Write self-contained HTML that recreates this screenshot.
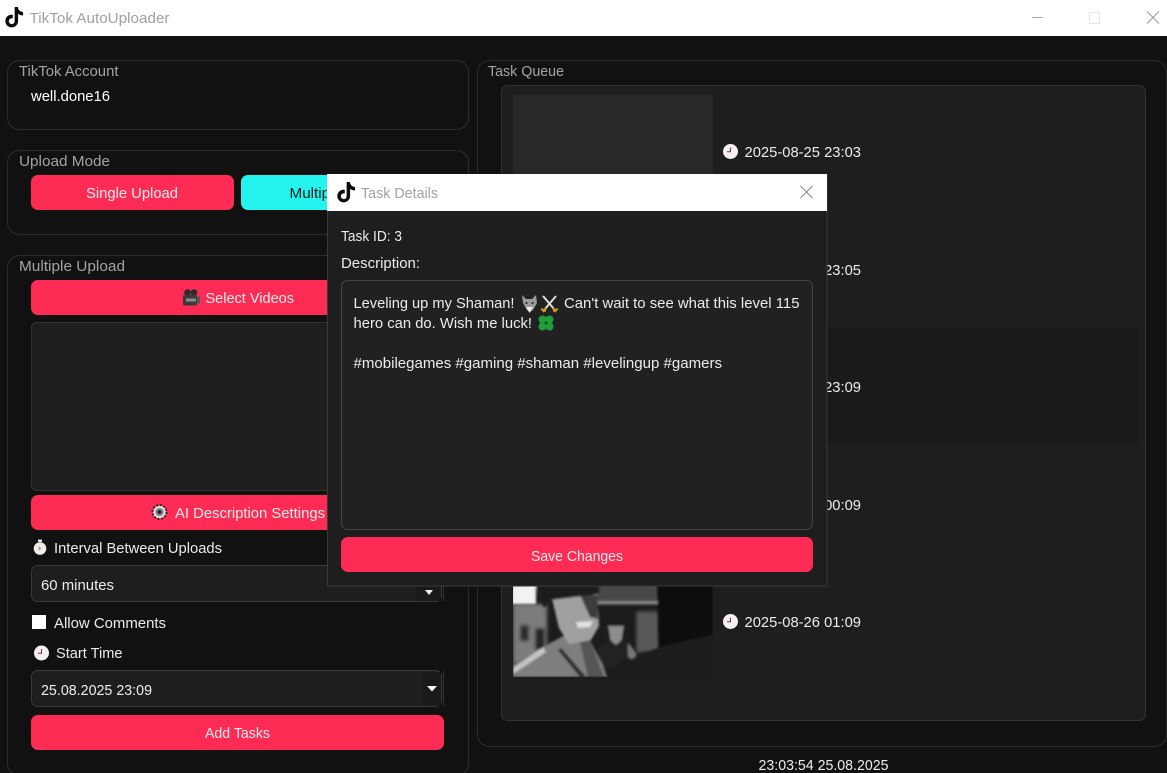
<!DOCTYPE html>
<html lang="en"><head><meta charset="utf-8"><title>TikTok AutoUploader</title>
<style>
html,body{margin:0;padding:0;width:1167px;height:773px;overflow:hidden;background:#111}
svg{display:block}
text{font-family:"Liberation Sans",sans-serif;font-size:15px;fill:#ececec}
.g{fill:#a4a4a4}
.t{fill:#a0a0a0}
.w{fill:#fff}
</style></head><body>
<svg width="1167" height="773" viewBox="0 0 1167 773" xmlns="http://www.w3.org/2000/svg">
<defs>
<path id="tk" d="M12.525.02c1.31-.02 2.61-.01 3.91-.02.08 1.53.63 3.09 1.75 4.17 1.12 1.11 2.7 1.62 4.24 1.79v4.03c-1.44-.05-2.89-.35-4.2-.97-.57-.26-1.1-.59-1.62-.93-.01 2.92.01 5.84-.02 8.75-.08 1.4-.54 2.79-1.35 3.94-1.31 1.92-3.58 3.17-5.91 3.21-1.43.08-2.86-.31-4.08-1.03-2.02-1.19-3.44-3.37-3.65-5.71-.02-.5-.03-1-.01-1.49.18-1.9 1.12-3.72 2.58-4.96 1.66-1.44 3.98-2.13 6.15-1.72.02 1.48-.04 2.96-.04 4.44-.99-.32-2.15-.23-3.02.37-.63.41-1.11 1.04-1.36 1.75-.21.51-.15 1.07-.14 1.61.24 1.64 1.82 3.02 3.5 2.87 1.12-.01 2.19-.66 2.77-1.61.19-.33.4-.67.41-1.06.1-1.79.06-3.57.07-5.36.01-4.03-.01-8.05.02-12.07z"/>
<g id="clk"><circle cx="8" cy="8" r="7.500" fill="#f4f1ee"/><path d="M8 4V8.200H4.500" fill="none" stroke="#7a2f48" stroke-width="1"/></g>
<filter id="b1" x="-10%" y="-10%" width="120%" height="120%"><feGaussianBlur stdDeviation="1"/></filter>
<filter id="b2" x="-10%" y="-10%" width="120%" height="120%"><feGaussianBlur stdDeviation="1.800"/></filter>
<clipPath id="pc"><rect x="513" y="565" width="200" height="112"/></clipPath>
</defs>

<rect width="1167" height="773" fill="#111"/>
<!-- title bar -->
<rect width="1167" height="36" fill="#fff"/>
<use href="#tk" transform="translate(4 7) scale(.85)" fill="#0c0c0c"/>
<text class="t" x="29.500" y="23" textLength="140" lengthAdjust="spacingAndGlyphs">TikTok AutoUploader</text>
<path d="M1032 17.500h11" stroke="#aaa"/>
<rect x="1089.500" y="12.500" width="10" height="11" fill="none" stroke="#e6e6e6"/>
<path d="M1147 11.500l12 12M1159 11.500l-12 12" stroke="#999" fill="none"/>

<!-- groups -->
<g fill="none" stroke="#2c2c2c" stroke-width="1">
<rect x="7.500" y="60.500" width="461" height="69" rx="12"/>
<rect x="7.500" y="150.500" width="461" height="84" rx="12"/>
<rect x="7.500" y="255.500" width="461" height="520" rx="12"/>
<rect x="477.500" y="60.500" width="689" height="686" rx="12"/>
</g>
<rect x="18" y="61" width="104" height="18" fill="#111"/>
<rect x="18" y="151" width="96" height="18" fill="#111"/>
<rect x="18" y="256" width="110" height="18" fill="#111"/>
<rect x="487" y="61" width="79" height="18" fill="#111"/>
<text class="g" x="19" y="76" textLength="99.500" lengthAdjust="spacingAndGlyphs">TikTok Account</text>
<text class="w" x="31" y="101" textLength="79" lengthAdjust="spacingAndGlyphs">well.done16</text>
<text class="g" x="19" y="166" textLength="91" lengthAdjust="spacingAndGlyphs">Upload Mode</text>
<text class="g" x="19" y="271" textLength="106" lengthAdjust="spacingAndGlyphs">Multiple Upload</text>
<text class="g" x="488" y="76" textLength="76" lengthAdjust="spacingAndGlyphs">Task Queue</text>

<!-- mode buttons -->
<rect x="31" y="175" width="203" height="35" rx="7" fill="#fe2c55"/>
<text x="86" y="198" textLength="92" lengthAdjust="spacingAndGlyphs">Single Upload</text>
<rect x="241" y="175" width="203" height="35" rx="7" fill="#25f4ee"/>
<text x="289.500" y="198" textLength="105" lengthAdjust="spacingAndGlyphs" style="fill:#06201f">Multiple Upload</text>

<!-- select videos -->
<rect x="31" y="280" width="413" height="35" rx="7" fill="#fe2c55"/>
<g transform="translate(183 289)">
<circle cx="4.500" cy="3.500" r="3.300" fill="#2c2c2c"/><circle cx="11" cy="3.500" r="3.300" fill="#2c2c2c"/>
<rect x="0" y="6" width="14" height="10.500" rx="1" fill="#3a3a3a"/><rect x="3" y="9.500" width="10" height="3" fill="#8a8a8a"/><path d="M14 8l3-1v8l-3-1z" fill="#555"/>
</g>
<text x="205.500" y="303" textLength="88.500" lengthAdjust="spacingAndGlyphs">Select Videos</text>

<!-- file list -->
<rect x="31.500" y="322.500" width="412" height="168" rx="5" fill="#1e1e1e" stroke="#333"/>

<!-- AI settings -->
<rect x="31" y="495" width="413" height="35" rx="7" fill="#fe2c55"/>
<g transform="translate(152 504.500)">
<circle cx="7.500" cy="7.500" r="6.300" fill="#e8e8e8"/>
<circle cx="7.500" cy="7.500" r="7" fill="none" stroke="#2a2a2a" stroke-width="2" stroke-dasharray="2 1.670"/>
<circle cx="7.500" cy="7.500" r="4.300" fill="#8c8c8c"/><circle cx="7.500" cy="7.500" r="2" fill="#222"/>
</g>
<text x="175" y="518" textLength="150" lengthAdjust="spacingAndGlyphs">AI Description Settings</text>

<!-- interval -->
<g transform="translate(33 539.500)"><rect x="5" y="0" width="4" height="2.500" fill="#ddd"/><circle cx="7" cy="9" r="6.300" fill="#f0ede8"/><path d="M5.500 7.500l2 1.500-2 1.500" stroke="#777" fill="none" stroke-width=".8"/></g>
<text x="54" y="553" textLength="168" lengthAdjust="spacingAndGlyphs">Interval Between Uploads</text>
<rect x="31.500" y="565.500" width="410" height="36" rx="6" fill="#1e1e1e" stroke="#3a3a3a"/>
<path d="M443.500 566v35" stroke="#333"/>
<rect x="416" y="567" width="25" height="34" fill="#1a1a1a"/>
<path d="M425 590h8l-4 5z" fill="#f2f2f2"/>
<text x="41" y="590" textLength="73" lengthAdjust="spacingAndGlyphs">60 minutes</text>

<!-- checkbox -->
<rect x="32" y="615" width="14" height="14" fill="#fff"/>
<text x="54" y="628" textLength="112" lengthAdjust="spacingAndGlyphs">Allow Comments</text>

<!-- start time -->
<use href="#clk" x="33.500" y="645"/>
<text x="56" y="658" textLength="66.500" lengthAdjust="spacingAndGlyphs">Start Time</text>
<rect x="31.500" y="670.500" width="410" height="36" rx="6" fill="#1e1e1e" stroke="#3a3a3a"/>
<path d="M443.500 671v35" stroke="#333"/>
<rect x="423" y="672" width="18" height="34" fill="#1a1a1a"/>
<path d="M427 686h10l-5 5.500z" fill="#f7f7f7"/>
<text x="41" y="695" textLength="111" lengthAdjust="spacingAndGlyphs">25.08.2025 23:09</text>
<rect x="31" y="715" width="413" height="35" rx="7" fill="#fe2c55"/>
<text x="205" y="738" textLength="65" lengthAdjust="spacingAndGlyphs">Add Tasks</text>

<!-- queue -->
<rect x="501.500" y="85.500" width="644" height="635" rx="6" fill="#1e1e1e" stroke="#333"/>
<rect x="507" y="327" width="631" height="118" rx="4" fill="#1a1a1a"/>
<rect x="513" y="95" width="200" height="112" fill="#282828"/>
<use href="#clk" x="722.500" y="143.500"/>
<text x="744.500" y="157" textLength="116.500" lengthAdjust="spacingAndGlyphs">2025-08-25 23:03</text>
<text x="744.500" y="275" textLength="116.500" lengthAdjust="spacingAndGlyphs">2025-08-25 23:05</text>
<text x="744.500" y="392" textLength="116.500" lengthAdjust="spacingAndGlyphs">2025-08-25 23:09</text>
<text x="744.500" y="510" textLength="116.500" lengthAdjust="spacingAndGlyphs">2025-08-26 00:09</text>
<use href="#clk" x="722.500" y="613.500"/>
<text x="744.500" y="627" textLength="116.500" lengthAdjust="spacingAndGlyphs">2025-08-26 01:09</text>

<!-- photo -->
<g clip-path="url(#pc)">
<rect x="513" y="565" width="200" height="112" fill="#1c1c1c"/>
<g filter="url(#b2)">
<rect x="590" y="580" width="72" height="24" fill="#4a4a4a"/>
<rect x="597" y="605" width="62" height="50" fill="#1b1b1b"/>
<rect x="637" y="612" width="22" height="40" fill="#585858"/>
<rect x="513" y="604" width="34" height="60" fill="#7c7c7c"/>
<rect x="520" y="625" width="9" height="16" fill="#2c2c2c"/>
<rect x="535" y="628" width="10" height="22" fill="#252525"/>
</g>
<g filter="url(#b1)">
<rect x="512" y="580" width="24" height="24" fill="#f2f2f2"/>
<rect x="597" y="601" width="62" height="3" fill="#8a8a8a"/>
<path d="M513 677v-12l30-18 22-12 22 0 16 30 4 12z" fill="#7e7e7e"/>
<path d="M580 642l10-2 14 37h-16z" fill="#555"/>
<path d="M513 668l30-21 3 5-33 22z" fill="#c4c4c4"/>
<path d="M561 648l25 29h-6l-22-27z" fill="#2a2a2a"/>
<path d="M550 590h48l0 18 1 18-8 14-22 4-10-16z" fill="#a0a0a0"/>
<path d="M580 595h18v24l-8-2z" fill="#3e3e3e"/>
<path d="M576 622l17-1-3 6-12 1z" fill="#e0e0e0"/>
<path d="M534 580h65v14l-48 6-7 8z" fill="#1a1a1a"/>
<path d="M597 648l12-6 20 0 8 12-14 6-12 10-8-6z" fill="#222"/>
<path d="M628 643l8 10v10l-8-6z" fill="#777"/>
<path d="M604 620c0-12 22-12 24-1l-3 8h-18z" fill="#1f1f1f"/>
<path d="M608 626h16l-2 14-6 5-6-5z" fill="#8c8c8c"/>
<path d="M657 580h56v60l-34 8-20 0z" fill="#101010"/>
<path d="M608 677c12-16 42-28 68-34l37-8v42z" fill="#1d1d1d"/>
</g>
</g>

<!-- footer clock -->
<text x="758.500" y="770" textLength="130" lengthAdjust="spacingAndGlyphs">23:03:54 25.08.2025</text>

<!-- dialog -->
<rect x="327" y="174" width="500" height="412" fill="#1e1e1e"/>
<rect x="327.500" y="174.500" width="499.500" height="411.500" fill="none" stroke="#3a3a3a"/>
<rect x="327" y="174" width="500" height="37" fill="#fff"/>
<use href="#tk" transform="translate(336 182) scale(.85)" fill="#0c0c0c"/>
<text class="t" x="361" y="198" textLength="77" lengthAdjust="spacingAndGlyphs">Task Details</text>
<path d="M800.500 186l12 12M812.500 186l-12 12" stroke="#888" fill="none"/>
<text x="341" y="241" textLength="61" lengthAdjust="spacingAndGlyphs">Task ID: 3</text>
<text x="341" y="268" textLength="79" lengthAdjust="spacingAndGlyphs">Description:</text>
<rect x="341.500" y="280.500" width="471" height="249" rx="6" fill="#212121" stroke="#444"/>
<text x="353.500" y="308" textLength="161" lengthAdjust="spacingAndGlyphs">Leveling up my Shaman!</text>
<g transform="translate(522 295)">
<path d="M0 0l4 4h6l4-4 1 8-4 7-3 2-3-2-4-7z" fill="#9a9a9a"/><path d="M4 12l3.500 6 3.500-6z" fill="#eee"/><circle cx="4.500" cy="8" r="1" fill="#222"/><circle cx="10.500" cy="8" r="1" fill="#222"/>
</g>
<g transform="translate(541 295)" fill="none">
<path d="M2 1l11 13M15 1L4 14" stroke="#ddd" stroke-width="2"/>
<path d="M0 14l5 2M17 14l-5 2M5 13l-3 4M12 13l3 4" stroke="#d6a21e" stroke-width="2"/>
</g>
<text x="564" y="308" textLength="235.500" lengthAdjust="spacingAndGlyphs">Can't wait to see what this level 115</text>
<text x="353.500" y="328" textLength="178.500" lengthAdjust="spacingAndGlyphs">hero can do. Wish me luck!</text>
<g transform="translate(538 315)" fill="#1f9e3a">
<circle cx="4.500" cy="4.500" r="4"/><circle cx="11.500" cy="4.500" r="4"/><circle cx="4.500" cy="11.500" r="4"/><circle cx="11.500" cy="11.500" r="4"/><circle cx="8" cy="8" r="1.500" fill="#0c5a20"/>
</g>
<text x="353.500" y="368" textLength="368.500" lengthAdjust="spacingAndGlyphs">#mobilegames #gaming #shaman #levelingup #gamers</text>
<rect x="341" y="537" width="472" height="35" rx="7" fill="#fe2c55"/>
<text x="531" y="561" textLength="92" lengthAdjust="spacingAndGlyphs">Save Changes</text>
</svg>
</body></html>
